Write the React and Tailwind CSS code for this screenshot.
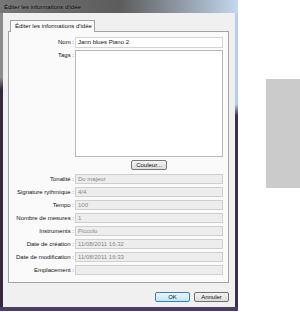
const LABEL_W = 'w-[66px]'

function Row({ label, children, className = '' }) {
  return (
    <div className={`flex items-start ${className}`}>
      <div className={`${LABEL_W} shrink-0 pr-[1px] text-right leading-[10px] text-[#111]`}>{label}</div>
      <div className="flex-1">{children}</div>
    </div>
  )
}

function ReadOnly({ value }) {
  return (
    <div className="h-[10px] border border-[#cfcfcf] bg-[#ededed] pl-[2px] leading-[8px] text-[#888]">
      {value}
    </div>
  )
}

const readOnlyRows = [
  ['Tonalité :', 'Do majeur'],
  ['Signature rythmique :', '4/4'],
  ['Tempo :', '100'],
  ['Nombre de mesures :', '1'],
  ['Instruments :', 'Piccolo'],
  ['Date de création :', '11/08/2011 16:32'],
  ['Date de modification :', '11/08/2011 16:33'],
  ['Emplacement :', ''],
]

export default function App() {
  return (
    <div className="flex h-[312px] w-[300px] overflow-hidden bg-white font-['Liberation_Sans',Arial,sans-serif] text-[6px]">
      {/* Dialog window */}
      <div className="flex h-[311px] w-[238px] shrink-0 flex-col">
        {/* Title bar */}
        <div className="flex h-[13px] shrink-0 items-center bg-gradient-to-r from-[#767676] via-[#5c5c5c] to-[#c3d8ee] pl-[4px] pt-[1px] text-black [text-shadow:0_0_2px_#9a9a9a]">
          Éditer les informations d'idée
        </div>

        <div className="flex flex-1">
          <div className="w-[3px] bg-gradient-to-b from-[#8c8c8c] from-[22%] to-[#34283f] to-[26%]" />

          {/* Client area */}
          <div className="flex flex-1 flex-col bg-[#f0f0f0] pl-[5px] pr-[6px] pt-[7px]">
            {/* Tab header */}
            <div className="relative z-10 -mb-[1px] ml-[2px] h-[12px] w-[85px] border border-b-0 border-[#a3a3a3] bg-[#fafafa] pl-[4px] leading-[11px] text-[#111]">
              Éditer les informations d'idée
            </div>

            {/* Tab panel */}
            <div className="flex h-[252px] flex-col border border-[#a3a3a3] bg-[#fafafa] pr-[5px] pt-[5px]">
              <Row label="Nom :">
                <div className="h-[11px] border border-[#d3d3d3] bg-white pl-[2px] leading-[9px] text-[#111]">
                  Jann blues Piano 2
                </div>
              </Row>

              <Row label="Tags :" className="mt-[2px]">
                <div className="h-[107px] border border-[#b8b8b8] bg-white" />
              </Row>

              <Row className="mt-[3px]">
                <div className="flex justify-center">
                  <div className="h-[10px] w-[36px] rounded-[2px] border border-[#777] bg-gradient-to-b from-[#f4f4f4] to-[#dcdcdc] text-center leading-[8px] text-[#111]">
                    Couleur...
                  </div>
                </div>
              </Row>

              <div className="mt-[4px] flex flex-col gap-[3px]">
                {readOnlyRows.map(([label, value]) => (
                  <Row key={label} label={label}>
                    <ReadOnly value={value} />
                  </Row>
                ))}
              </div>
            </div>

            {/* Buttons */}
            <div className="mt-[9px] flex justify-end gap-[4px]">
              <div className="h-[10px] w-[35px] rounded-[2px] border border-[#3c7fb1] bg-gradient-to-b from-[#eaf6fd] to-[#bee6fd] text-center leading-[8px] text-[#111]">
                OK
              </div>
              <div className="h-[10px] w-[35px] rounded-[2px] border border-[#707070] bg-gradient-to-b from-[#f2f2f2] to-[#dcdcdc] text-center leading-[8px] text-[#111]">
                Annuler
              </div>
            </div>
          </div>

          <div className="w-[3px] bg-gradient-to-b from-[#b8cfe8] from-[31%] to-[#3b2e50] to-[35%]" />
        </div>

        {/* Bottom frame */}
        <div className="h-[4px] shrink-0 bg-[#4e3b66]" />
      </div>

      {/* Right side */}
      <div className="flex-1 pl-[28px] pt-[79px]">
        <div className="h-[109px] bg-[#cbcbcb]" />
      </div>
    </div>
  )
}
